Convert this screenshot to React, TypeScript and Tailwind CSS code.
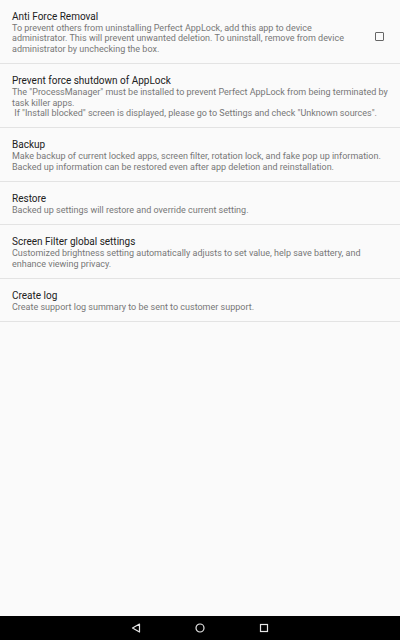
import React from "react";

type Item = { title: string; lines: string[]; checkbox?: boolean };

const items: Item[] = [
  {
    title: "Anti Force Removal",
    lines: [
      "To prevent others from uninstalling Perfect AppLock, add this app to device",
      "administrator. This will prevent unwanted deletion. To uninstall, remove from device",
      "administrator by unchecking the box.",
    ],
    checkbox: true,
  },
  {
    title: "Prevent force shutdown of AppLock",
    lines: [
      "The \"ProcessManager\" must be installed to prevent Perfect AppLock from being terminated by",
      "task killer apps.",
      "\u00a0If \"Install blocked\" screen is displayed, please go to Settings and check \"Unknown sources\".",
    ],
  },
  {
    title: "Backup",
    lines: [
      "Make backup of current locked apps, screen filter, rotation lock, and fake pop up information.",
      "Backed up information can be restored even after app deletion and reinstallation.",
    ],
  },
  {
    title: "Restore",
    lines: ["Backed up settings will restore and override current setting."],
  },
  {
    title: "Screen Filter global settings",
    lines: [
      "Customized brightness setting automatically adjusts to set value, help save battery, and",
      "enhance viewing privacy.",
    ],
  },
  {
    title: "Create log",
    lines: ["Create support log summary to be sent to customer support."],
  },
];

export default function App() {
  return (
    <div
      className="w-[400px] h-[640px] flex flex-col bg-[#fafafa] overflow-hidden"
      style={{ fontFamily: "Roboto, 'Noto Sans', sans-serif" }}
    >
      <div className="flex-1 flex flex-col">
        {items.map((it, i) => (
          <div
            key={i}
            className={`flex items-center border-b border-[#e3e3e3] pl-[12px] pr-[8px] ${i === 0 ? "pt-[9.5px]" : "pt-[10px]"} pb-[8.3px]`}
          >
            <div className="flex-1 min-w-0">
              <div className="text-[10px] leading-[13px] text-[#212121]">{it.title}</div>
              {it.lines.map((l, j) => (
                <div key={j} className="text-[9px] leading-[10.7px] text-[#777777] whitespace-nowrap">
                  {l}
                </div>
              ))}
            </div>
            {it.checkbox && (
              <div className="w-[9px] h-[9px] border-[1.5px] border-[#666666] rounded-[1px] mr-[8px] mt-[8px] shrink-0" />
            )}
          </div>
        ))}
      </div>
      <div className="h-[24px] bg-black flex items-center justify-center shrink-0">
        <div className="flex items-center gap-[54px] ml-[-1px]">
          <svg width="10" height="10" viewBox="0 0 10 10">
            <path d="M8.5 1 L1.5 5 L8.5 9 Z" fill="none" stroke="#e6e6e6" strokeWidth="1.2" strokeLinejoin="round" />
          </svg>
          <svg width="10" height="10" viewBox="0 0 10 10">
            <circle cx="5" cy="5" r="4" fill="none" stroke="#e6e6e6" strokeWidth="1.2" />
          </svg>
          <svg width="10" height="10" viewBox="0 0 10 10">
            <rect x="1.5" y="1.5" width="7" height="7" fill="none" stroke="#e6e6e6" strokeWidth="1.2" />
          </svg>
        </div>
      </div>
    </div>
  );
}
